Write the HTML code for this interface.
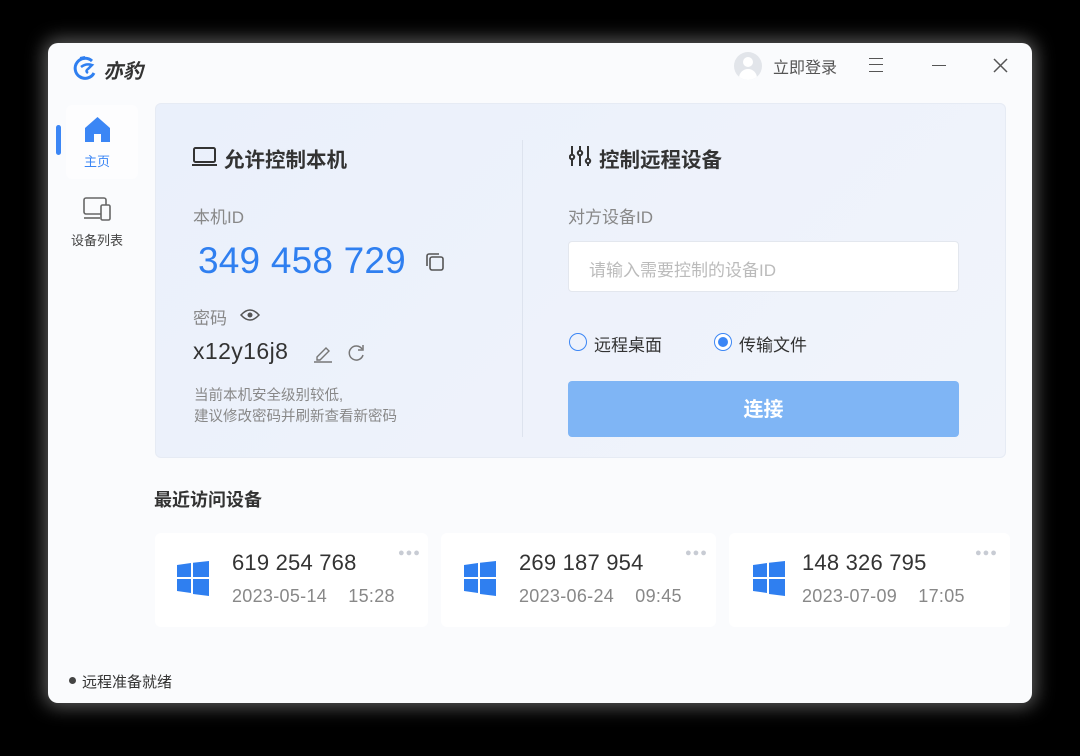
<!DOCTYPE html>
<html><head><meta charset="utf-8"><style>
*{margin:0;padding:0;box-sizing:border-box}
body{width:1080px;height:756px;background:#000;position:relative;overflow:hidden;font-family:"Liberation Sans","Noto Sans CJK SC",sans-serif;color:#333}
.a{position:absolute;white-space:nowrap}
#win{position:absolute;left:48px;top:43px;width:984px;height:660px;background:#fafbfd;border-radius:10px;box-shadow:0 0 18px 4px rgba(255,255,255,.35)}
.card{position:absolute;top:533px;height:94px;background:#fff;border-radius:6px}
.id{font-size:22px;color:#333;letter-spacing:.2px}
.dt{font-size:18px;color:#888;letter-spacing:.3px}
.dots{font-size:11px;color:#c8ccd4;letter-spacing:1px}
</style></head><body>
<div id="win"></div>
<!-- logo -->
<svg class="a" style="left:72px;top:55px" width="26" height="26" viewBox="0 0 26 26"><path d="M20 6 A10 10 0 1 0 22 18" fill="none" stroke="#2f7ff0" stroke-width="3"/><path d="M9 12 Q14 8 20 10 L16 14 Q13 16 16 18" fill="none" stroke="#2f7ff0" stroke-width="2.5"/><path d="M8 3 L13 2" stroke="#2f7ff0" stroke-width="2"/></svg>
<div class="a" style="left:103px;top:55px;font-size:20px;font-weight:bold;font-style:italic;color:#333">亦豹</div>
<!-- top right -->
<div class="a" style="left:734px;top:52px;width:28px;height:28px;border-radius:50%;background:#e2e5ea;overflow:hidden"><div style="position:absolute;left:9px;top:5px;width:10px;height:10px;border-radius:50%;background:#fff"></div><div style="position:absolute;left:5px;top:17px;width:18px;height:14px;border-radius:9px 9px 0 0;background:#fff"></div></div>
<div class="a" style="left:773px;top:54px;font-size:16px;color:#555">立即登录</div>
<div class="a" style="left:869px;top:58px;width:14px;height:14px;border-top:1.5px solid #555;border-bottom:1.5px solid #555"><div style="margin-top:5px;border-top:1.5px solid #555"></div></div>
<div class="a" style="left:932px;top:65px;width:14px;border-top:1.5px solid #555"></div>
<svg class="a" style="left:993px;top:58px" width="15" height="15"><path d="M1 1L14 14M14 1L1 14" stroke="#555" stroke-width="1.5"/></svg>
<!-- sidebar -->
<div class="a" style="left:56px;top:125px;width:5px;height:30px;background:#3b86f5;border-radius:3px"></div>
<div class="a" style="left:66px;top:105px;width:72px;height:74px;background:#fdfdfe;border-radius:6px"></div>
<svg class="a" style="left:84px;top:116px" width="27" height="27" viewBox="0 0 27 27"><path d="M13.5 1 L26 12 V26 H17 V18 H10 V26 H1 V12 Z" fill="#3b86f5" stroke-linejoin="round"/></svg>
<div class="a" style="left:84px;top:151px;font-size:13px;color:#3b86f5">主页</div>
<svg class="a" style="left:82px;top:196px" width="30" height="26" viewBox="0 0 30 26"><rect x="2" y="2" width="22" height="16" rx="2" fill="none" stroke="#666" stroke-width="1.6"/><path d="M2 22H18" stroke="#666" stroke-width="1.6"/><rect x="19" y="9" width="9" height="15" rx="1.5" fill="#fafbfd" stroke="#666" stroke-width="1.6"/></svg>
<div class="a" style="left:71px;top:230px;font-size:13px;color:#444">设备列表</div>
<!-- main panel -->
<div class="a" style="left:155px;top:103px;width:851px;height:355px;background:linear-gradient(135deg,#eaf0fb,#f1f4fb);border-radius:6px;border:1px solid #e6ebf4"></div>
<div class="a" style="left:522px;top:140px;width:1px;height:297px;background:#dde3ee"></div>
<svg class="a" style="left:192px;top:146px" width="26" height="22" viewBox="0 0 26 22"><rect x="2" y="2" width="21" height="14" rx="1.5" fill="none" stroke="#333" stroke-width="2"/><path d="M0 19H25" stroke="#333" stroke-width="2"/></svg>
<div class="a" style="left:224px;top:143px;font-size:20.5px;font-weight:bold;color:#333">允许控制本机</div>
<div class="a" style="left:193px;top:203px;font-size:17px;color:#888">本机ID</div>
<div class="a" style="left:198px;top:240px;font-size:37px;color:#2f7ff0;letter-spacing:.2px">349 458 729</div>
<svg class="a" style="left:425px;top:252px" width="20" height="20" viewBox="0 0 20 20"><rect x="5" y="5" width="13" height="13" rx="2" fill="none" stroke="#555" stroke-width="1.6"/><path d="M2 14V4a2 2 0 0 1 2-2h10" fill="none" stroke="#555" stroke-width="1.6"/></svg>
<div class="a" style="left:193px;top:304px;font-size:17px;color:#888">密码</div>
<svg class="a" style="left:240px;top:308px" width="20" height="14" viewBox="0 0 20 14"><path d="M1 7Q10 -3 19 7Q10 17 1 7Z" fill="none" stroke="#555" stroke-width="1.5"/><circle cx="10" cy="7" r="2.5" fill="#555"/></svg>
<div class="a" style="left:193px;top:338px;font-size:23px;color:#333;letter-spacing:.4px">x12y16j8</div>
<svg class="a" style="left:313px;top:343px" width="20" height="20" viewBox="0 0 20 20"><path d="M4 14L13 5l3 3-9 9H4z" fill="none" stroke="#777" stroke-width="1.4"/><path d="M1 19H19" stroke="#777" stroke-width="1.4"/></svg>
<svg class="a" style="left:346px;top:343px" width="20" height="20" viewBox="0 0 20 20"><path d="M16 6A7 7 0 1 0 17 12" fill="none" stroke="#777" stroke-width="1.5"/><path d="M17 2V7H12" fill="none" stroke="#777" stroke-width="1.5"/></svg>
<div class="a" style="left:194px;top:386px;font-size:14.5px;color:#888;line-height:21px">当前本机安全级别较低,<br>建议修改密码并刷新查看新密码</div>
<!-- right side -->
<svg class="a" style="left:569px;top:145px" width="24" height="22" viewBox="0 0 24 22"><g stroke="#333" stroke-width="2" fill="none"><path d="M3 1V9M3 15V21M11 1V5M11 11V21M19 1V13M19 19V21"/><circle cx="3" cy="12" r="2.2"/><circle cx="11" cy="8" r="2.2"/><circle cx="19" cy="16" r="2.2"/></g></svg>
<div class="a" style="left:599px;top:143px;font-size:20.5px;font-weight:bold;color:#333">控制远程设备</div>
<div class="a" style="left:568px;top:203px;font-size:17px;color:#888">对方设备ID</div>
<div class="a" style="left:568px;top:241px;width:391px;height:51px;background:#fff;border:1px solid #e3e7ee;border-radius:4px"></div>
<div class="a" style="left:589px;top:256px;font-size:17px;color:#bbb">请输入需要控制的设备ID</div>
<div class="a" style="left:569px;top:333px;width:18px;height:18px;border:1.5px solid #3b86f5;border-radius:50%"></div>
<div class="a" style="left:594px;top:331px;font-size:17px;color:#333">远程桌面</div>
<div class="a" style="left:714px;top:333px;width:18px;height:18px;border:1.5px solid #3b86f5;border-radius:50%;background:#fff"><div style="margin:2.5px;width:10px;height:10px;border-radius:50%;background:#3b86f5"></div></div>
<div class="a" style="left:739px;top:331px;font-size:17px;color:#333">传输文件</div>
<div class="a" style="left:568px;top:381px;width:391px;height:56px;background:#7fb5f5;border-radius:4px;color:#fff;font-size:20px;font-weight:bold;text-align:center;line-height:58px">连接</div>
<!-- recent -->
<div class="a" style="left:154px;top:486px;font-size:18px;font-weight:bold;color:#333">最近访问设备</div>
<div class="card" style="left:155px;width:273px"></div>
<div class="card" style="left:441px;width:275px"></div>
<div class="card" style="left:729px;width:281px"></div>

<svg class="a" style="left:177px;top:561px" width="32" height="35" viewBox="0 0 32 35"><path d="M0 4L14 2V16H0ZM16 1.7L32 0V16H16ZM0 18H14V32L0 30ZM16 18H32V35L16 33Z" fill="#2f7ff0"/></svg>
<div class="a id" style="left:232px;top:550px">619 254 768</div>
<div class="a dt" style="left:232px;top:586px">2023-05-14&nbsp;&nbsp;&nbsp;&nbsp;15:28</div>
<div class="a dots" style="left:398px;top:547px">●●●</div>

<svg class="a" style="left:464px;top:561px" width="32" height="35" viewBox="0 0 32 35"><path d="M0 4L14 2V16H0ZM16 1.7L32 0V16H16ZM0 18H14V32L0 30ZM16 18H32V35L16 33Z" fill="#2f7ff0"/></svg>
<div class="a id" style="left:519px;top:550px">269 187 954</div>
<div class="a dt" style="left:519px;top:586px">2023-06-24&nbsp;&nbsp;&nbsp;&nbsp;09:45</div>
<div class="a dots" style="left:685px;top:547px">●●●</div>

<svg class="a" style="left:753px;top:561px" width="32" height="35" viewBox="0 0 32 35"><path d="M0 4L14 2V16H0ZM16 1.7L32 0V16H16ZM0 18H14V32L0 30ZM16 18H32V35L16 33Z" fill="#2f7ff0"/></svg>
<div class="a id" style="left:802px;top:550px">148 326 795</div>
<div class="a dt" style="left:802px;top:586px">2023-07-09&nbsp;&nbsp;&nbsp;&nbsp;17:05</div>
<div class="a dots" style="left:975px;top:547px">●●●</div>

<!-- status -->
<div class="a" style="left:69px;top:677px;width:7px;height:7px;border-radius:50%;background:#444"></div>
<div class="a" style="left:82px;top:671px;font-size:15px;color:#333">远程准备就绪</div>
</body></html>
